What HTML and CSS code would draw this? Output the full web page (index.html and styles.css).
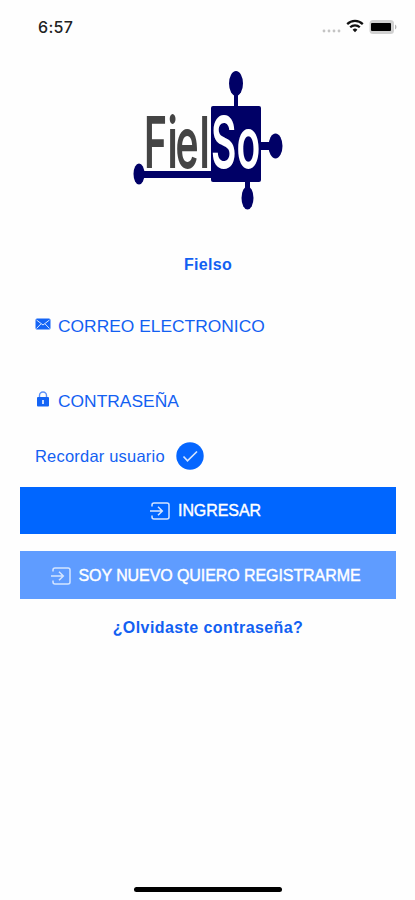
FILE: index.html
```html
<!DOCTYPE html>
<html lang="es">
<head>
    <meta charset="UTF-8">
    <meta name="viewport" content="width=device-width, initial-scale=1.0">
    <title>Fielso</title>
    <link rel="stylesheet" href="styles.css">
</head>
<body>
    <div class="status-bar">
        <span class="time">6:57</span>
        <div class="status-icons">
            <svg class="signal" width="20" height="4" viewBox="0 0 20 4" fill="#c4c4c4">
                <circle cx="2" cy="2" r="1.4"/><circle cx="7" cy="2" r="1.4"/><circle cx="12" cy="2" r="1.4"/><circle cx="17" cy="2" r="1.4"/>
            </svg>
            <svg class="wifi" width="18" height="14" viewBox="0 0 18 14" fill="none" stroke="#111" stroke-width="2.2">
                <path d="M1.2 5.1a11 11 0 0 1 15.6 0M4.2 8.3a6.8 6.8 0 0 1 9.6 0"/>
                <path d="M9 13.2L6.6 10.8a3.4 3.4 0 0 1 4.8 0z" fill="#111" stroke="none"/>
            </svg>
            <svg class="battery" width="28" height="16" viewBox="0 0 28 16">
                <rect x="0.5" y="1" width="24.5" height="14" rx="3.5" fill="#d0d0d0"/>
                <path d="M26 5.5q1.5 .6 1.5 2.5t-1.5 2.5z" fill="#b5b5b5"/>
                <rect x="2" y="4" width="20" height="8" rx="1" fill="#000"/>
            </svg>
        </div>
    </div>

    <form class="login">
        <svg class="logo" width="150" height="142" viewBox="0 0 150 142">
            <g fill="#000066">
                <rect x="78" y="37" width="50" height="76" rx="2"/>
                <rect x="101" y="20" width="4" height="18"/>
                <ellipse cx="103" cy="14.5" rx="7" ry="12.5"/>
                <rect x="126" y="73" width="12" height="8"/>
                <ellipse cx="142.5" cy="77" rx="7" ry="12.5"/>
                <rect x="112" y="112" width="5" height="10"/>
                <ellipse cx="114.5" cy="129" rx="6" ry="11.5"/>
                <rect x="10" y="102" width="70" height="7"/>
                <ellipse cx="6" cy="105" rx="5.5" ry="10.5"/>
            </g>
            <text transform="scale(0.55 1)" x="20 62.7 77.3 121 142 188" y="99.5"><tspan class="logo-gray">Fiel</tspan><tspan class="logo-white">So</tspan></text>
        </svg>
        <h1 class="title">Fielso</h1>

        <label class="field">
            <svg width="16" height="12" viewBox="0 0 16 12">
                <rect x="0.5" y="0.5" width="15" height="11" rx="1.5" fill="#1464f5"/>
                <path d="M1.5 2l6.5 5 6.5-5M1.5 10.5l4.3-4.5M14.5 10.5l-4.3-4.5" fill="none" stroke="#dce8ff" stroke-width="1"/>
            </svg>
            <span>CORREO ELECTRONICO</span>
        </label>
        <label class="field password">
            <svg width="16" height="16" viewBox="0 0 16 16">
                <path d="M4.5 7V4.5a3.5 3.5 0 0 1 7 0V7" fill="none" stroke="#5d91f7" stroke-width="1.4"/>
                <rect x="2" y="6" width="12" height="9.5" rx="1" fill="#1464f5"/>
                <path d="M8 9v4" stroke="#dce8ff" stroke-width="1.8"/>
            </svg>
            <span>CONTRASEÑA</span>
        </label>

        <div class="remember">
            <span>Recordar usuario</span>
            <svg width="28" height="28" viewBox="0 0 28 28">
                <circle cx="14" cy="14" r="13.7" fill="#0566ff"/>
                <path d="M7.5 14.5l4 4.3 9.5-9.3" fill="none" stroke="#d5e5ff" stroke-width="1.7"/>
            </svg>
        </div>

        <button type="button" class="btn">
            <svg width="20" height="18" viewBox="0 0 20 18">
                <path d="M2 4.5V3Q2 1 4 1H17Q19 1 19 3V15Q19 17 17 17H4Q2 17 2 15V13.5M0 9H12M8 4.8L12.3 9 8 13.2"/>
            </svg>
            <span>INGRESAR</span>
        </button>
        <button type="button" class="btn btn-light">
            <svg width="20" height="18" viewBox="0 0 20 18">
                <path d="M2 4.5V3Q2 1 4 1H17Q19 1 19 3V15Q19 17 17 17H4Q2 17 2 15V13.5M0 9H12M8 4.8L12.3 9 8 13.2"/>
            </svg>
            <span>SOY NUEVO QUIERO REGISTRARME</span>
        </button>
        <a class="forgot">¿Olvidaste contraseña?</a>
    </form>

    <div class="home-indicator"></div>
</body>
</html>
```
FILE: styles.css
```css
* {
    box-sizing: border-box;
}

body {
    margin: 0;
    height: 900px;
    display: flex;
    flex-direction: column;
    background: #fefefe;
    color: #1260f2;
    font-family: "Liberation Sans", Arial, sans-serif;
    overflow: hidden;
}

.status-bar {
    display: flex;
    justify-content: space-between;
    height: 69px;
    padding: 17px 18px 0 38px;
}

.time {
    color: #222;
    font-family: Inter, sans-serif;
    font-size: 16px;
    font-weight: 500;
    line-height: 20px;
    letter-spacing: 0.3px;
}

.status-icons {
    display: flex;
    align-items: flex-start;
}

.signal {
    margin-top: 12px;
}

.wifi {
    margin: 2px 5px 0 4px;
}

.battery {
    margin-top: 2px;
}

.login {
    display: flex;
    flex-direction: column;
    padding: 0 19px 0 20px;
}

.logo {
    margin-left: 113px;
}

.logo text {
    font-family: Inter, sans-serif;
    font-size: 71px;
    font-weight: 600;
}

.logo-gray {
    fill: #444;
}

.logo-white {
    fill: #fff;
}

.title {
    margin: 44px 0 0;
    font-size: 16px;
    line-height: 20px;
    letter-spacing: 0.3px;
    text-align: center;
}

.field {
    display: flex;
    align-items: center;
    gap: 7px;
    height: 20px;
    margin: 41px 0 0 15px;
    font-size: 17.4px;
}

.field svg {
    margin-bottom: 4px;
}

.password {
    margin-top: 55px;
}

.remember {
    display: flex;
    align-items: center;
    gap: 11px;
    height: 28px;
    margin: 31px 0 0 15px;
    font-size: 16.5px;
    letter-spacing: 0.2px;
}

.btn {
    display: flex;
    align-items: center;
    justify-content: center;
    gap: 8px;
    height: 47px;
    margin-top: 17px;
    padding: 1px 5px 0 0;
    border: none;
    background: #0066ff;
    color: #fff;
    font-family: inherit;
    font-size: 16px;
    letter-spacing: -0.08px;
    -webkit-text-stroke: 0.4px #fff;
}

.btn path {
    fill: none;
    stroke: #d5e5ff;
    stroke-width: 1.5;
}

.btn-light {
    height: 48px;
    padding-top: 2px;
    background: #5f9cff;
}

.forgot {
    margin-top: 19px;
    font-size: 16px;
    font-weight: bold;
    line-height: 20px;
    letter-spacing: 0.42px;
    text-align: center;
}

.home-indicator {
    width: 148px;
    height: 5px;
    margin: auto auto 8px 134px;
    border-radius: 3px;
    background: #000;
}
```
